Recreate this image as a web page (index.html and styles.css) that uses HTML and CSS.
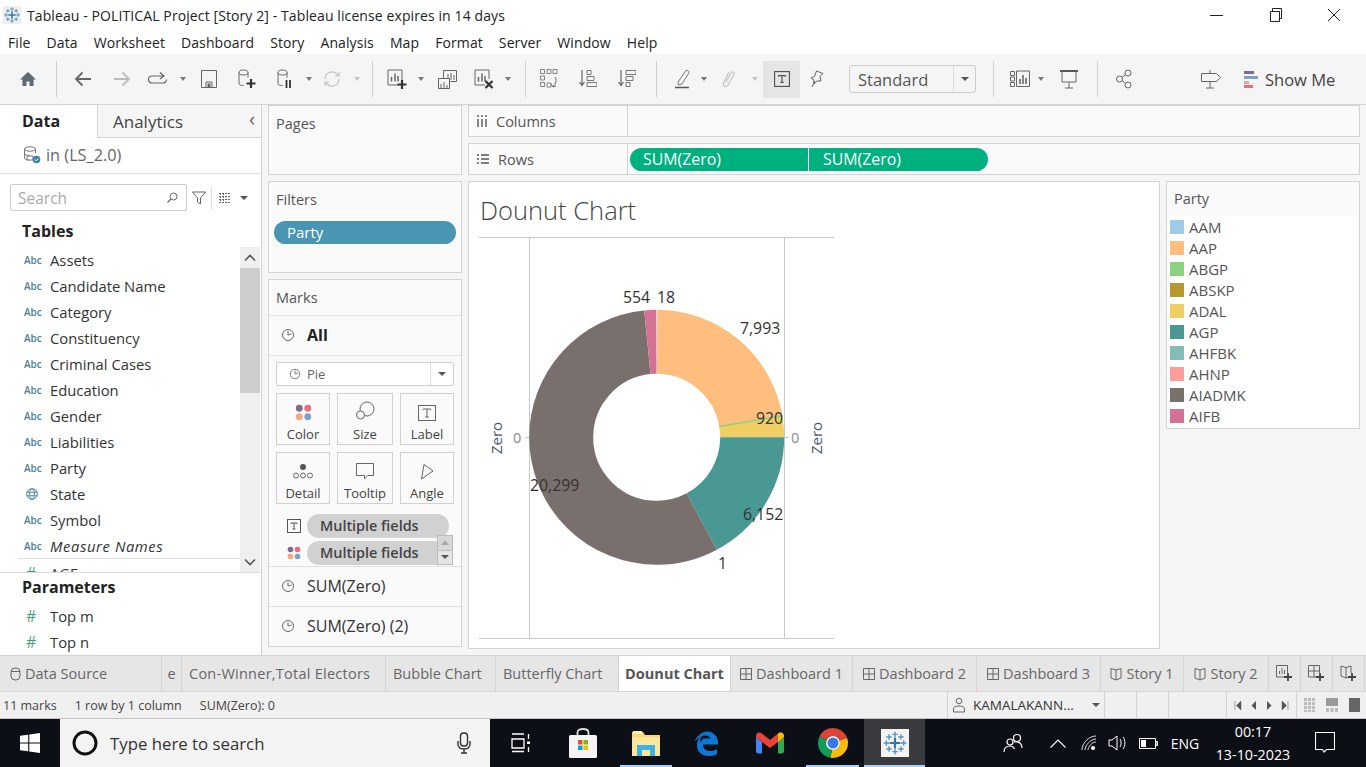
FILE: index.html
```html
<!DOCTYPE html>
<html lang="en">
<head>
  <meta charset="UTF-8" />
  <title>Tableau - POLITICAL Project [Story 2]</title>
  <link rel="stylesheet" href="styles.css">
</head>
<body>
  <svg class="defs" width="0" height="0">
    <symbol id="logo" viewBox="0 0 24 24">
      <g fill="none" stroke="#5b93bd" stroke-width="1.300">
        <path d="M12 1.500v5M9.500 4h5M12 17.500v5M9.500 20h5M1.500 12h5M4 9.500v5M17.500 12h5M20 9.500v5"/>
        <path d="M6.500 4v5M4 6.500h5M17.500 4v5M15 6.500h5M6.500 15v5M4 17.500h5M17.500 15v5M15 17.500h5"/>
        <path d="M12 7v10M7 12h10" stroke-width="2" stroke="#2f76a8"/>
      </g>
    </symbol>
    <symbol id="pie" viewBox="0 0 14 14">
      <circle cx="7" cy="7" r="5.500" fill="none" stroke="#666"/>
      <path d="M7 7V3M7 7l3.500-1" fill="none" stroke="#666"/>
    </symbol>
    <symbol id="dots" viewBox="0 0 16 16">
      <circle cx="4" cy="4" r="3.200" fill="#7b6a94"/>
      <circle cx="12" cy="4" r="3.200" fill="#ee6a7c"/>
      <circle cx="4" cy="12" r="3.200" fill="#f3a97f"/>
      <circle cx="12" cy="12" r="3.200" fill="#7ba1cc"/>
    </symbol>
    <symbol id="tbox" viewBox="0 0 14 14">
      <rect x="0.500" y="0.500" width="13" height="13" fill="none" stroke="#555"/>
      <path d="M4 5V4h6v1M7 4v6M5.500 10h3" fill="none" stroke="#555"/>
    </symbol>
    <symbol id="dash" viewBox="0 0 12 12">
      <path d="M.5.5h11v11H.5zM6 .5v11M.5 6h11" fill="none" stroke="#666"/>
    </symbol>
    <symbol id="story" viewBox="0 0 12 14">
      <path d="M1 1.500l5 1.500 5-1.500v9.500l-5 2-5-2zM6 3v10" fill="none" stroke="#666"/>
    </symbol>
  </svg>

  <div class="app">
    <div class="titlebar">
      <svg class="title-logo" width="18" height="18"><use href="#logo"/></svg>
      <span class="title-text">Tableau - POLITICAL Project [Story 2] - Tableau license expires in 14 days</span>
      <div class="window-btns">
        <svg width="14" height="14" viewBox="0 0 14 14"><path d="M0 7.500h13" stroke="#222" fill="none"/></svg>
        <svg width="14" height="14" viewBox="0 0 14 14"><path d="M1.500 3.500h9v10h-9zM3.500 3.500v-3h9v10h-2" stroke="#222" fill="none"/></svg>
        <svg width="14" height="14" viewBox="0 0 14 14"><path d="M1 1l12 12M13 1L1 13" stroke="#222" fill="none"/></svg>
      </div>
    </div>

    <nav class="menubar">
      <a>File</a><a>Data</a><a>Worksheet</a><a>Dashboard</a><a>Story</a><a>Analysis</a><a>Map</a><a>Format</a><a>Server</a><a>Window</a><a>Help</a>
    </nav>

    <div class="toolbar">
      <div class="tb"><svg width="18" height="18" viewBox="0 0 18 18"><path d="M9 2L1 9.500h2.500V16h4v-4.500h3V16h4V9.500H17z" fill="#5f6a75"/></svg></div>
      <div class="tb"><i class="sep"></i></div>
      <div class="tb"><svg width="18" height="18" viewBox="0 0 18 18"><path d="M17 9H2M8.500 2.500L2 9l6.500 6.500" fill="none" stroke="#666" stroke-width="1.800"/></svg></div>
      <div class="tb"><svg width="18" height="18" viewBox="0 0 18 18"><path d="M1 9h15M9.500 2.500L16 9l-6.500 6.500" fill="none" stroke="#bbb" stroke-width="1.800"/></svg></div>
      <div class="tb"><svg width="20" height="14" viewBox="0 0 20 14"><path d="M15 4H4a3.500 3.500 0 0 0 0 7h11a3.500 3.500 0 0 0 3.500-3.500M12 .5L16 4l-4 3" fill="none" stroke="#666" stroke-width="1.200"/></svg></div>
      <div class="tb"><i class="caret"></i></div>
      <div class="tb"><svg width="16" height="18" viewBox="0 0 16 18"><path d="M.5.5h15v17H.5zM5 17.500V12h6v5.500" fill="none" stroke="#666"/><path d="M6.500 13.500h3v4h-3z" fill="#666"/></svg></div>
      <div class="tb"><svg width="18" height="20" viewBox="0 0 18 20"><path d="M1 3.500v11c0 1.500 2 2 4.500 2M10 3.500v5" fill="none" stroke="#666"/><ellipse cx="5.500" cy="3.500" rx="4.500" ry="2.500" fill="none" stroke="#666"/><path d="M13 10v9M8.500 14.500h9" stroke="#333" stroke-width="2.200"/></svg></div>
      <div class="tb"><svg width="16" height="20" viewBox="0 0 16 20"><path d="M1 3.500v11c0 1.500 2 2 4.500 2M10 3.500v5" fill="none" stroke="#666"/><ellipse cx="5.500" cy="3.500" rx="4.500" ry="2.500" fill="none" stroke="#666"/><path d="M9.500 11v8M13 11v8" stroke="#333" stroke-width="1.800"/></svg></div>
      <div class="tb"><i class="caret"></i></div>
      <div class="tb"><svg width="18" height="18" viewBox="0 0 18 18"><path d="M2 9a7 7 0 0 1 12-5l2 2M16 9a7 7 0 0 1-12 5l-2-2M16 2v4h-4M2 16v-4h4" fill="none" stroke="#c4c4c4" stroke-width="1.200"/></svg></div>
      <div class="tb"><i class="caret off"></i></div>
      <div class="tb"><i class="sep"></i></div>
      <div class="tb"><svg width="20" height="20" viewBox="0 0 20 20"><path d="M12 16H1V1h14v10" fill="none" stroke="#666"/><path d="M4.500 12.500V8M8 12.500V4.500M11 12.500V7" stroke="#666" stroke-width="1.500"/><path d="M15 11v9M10.500 15.500h9" stroke="#333" stroke-width="2.200"/></svg></div>
      <div class="tb"><i class="caret"></i></div>
      <div class="tb"><svg width="19" height="19" viewBox="0 0 19 19"><path d="M5.500 8V.5h13v11h-6" fill="none" stroke="#666"/><path d="M.5 8.500h11v10H.5zM10 8V4M13 10V3M16 10V5" fill="none" stroke="#666"/><path d="M3 18v-4M6 18v-6M9 18v-3" stroke="#666"/></svg></div>
      <div class="tb"><svg width="20" height="20" viewBox="0 0 20 20"><path d="M11 16H1V1h14v9" fill="none" stroke="#666"/><path d="M4.500 12.500V8M8 12.500V4.500M11 12.500V7" stroke="#666" stroke-width="1.500"/><path d="M11.500 12l7 7M18.500 12l-7 7" stroke="#333" stroke-width="2.200"/></svg></div>
      <div class="tb"><i class="caret"></i></div>
      <div class="tb"><i class="sep"></i></div>
      <div class="tb"><svg width="18" height="20" viewBox="0 0 18 20"><path d="M.5.5h4v4h-4zM7 .5h4v4H7zM13 .5h4v4h-4zM.5 7h4v4h-4zM.5 13.500h4v4h-4zM7 14h4v4H7z" fill="none" stroke="#777" stroke-width=".9"/><path d="M15 8c2 3 1 7-2 9M11 15l2 3 3-1" fill="none" stroke="#666"/></svg></div>
      <div class="tb"><svg width="18" height="20" viewBox="0 0 18 20"><path d="M3 1v15M.5 13L3 16.500 5.500 13" fill="none" stroke="#666" stroke-width="1.200"/><path d="M8 1.500h4v4H8zM8 7.500h7v4H8zM8 13.500h10v4H8z" fill="none" stroke="#777"/></svg></div>
      <div class="tb"><svg width="18" height="20" viewBox="0 0 18 20"><path d="M3 1v15M.5 13L3 16.500 5.500 13" fill="none" stroke="#666" stroke-width="1.200"/><path d="M8 1.500h10v4H8zM8 7.500h7v4H8zM8 13.500h4v4H8z" fill="none" stroke="#777"/></svg></div>
      <div class="tb"><i class="sep"></i></div>
      <div class="tb"><svg width="16" height="20" viewBox="0 0 16 20"><path d="M3 13L11 1.500c1-1 3.500.5 3 2L7 15 3.500 16z" fill="none" stroke="#777"/><path d="M0 18.500h14" stroke="#555" stroke-width="1.500"/></svg></div>
      <div class="tb"><i class="caret"></i></div>
      <div class="tb"><svg width="14" height="20" viewBox="0 0 14 20"><path d="M4 13l5-9c1-2 4-.5 3 1.500L6 16c-2 3-6 1-4.500-2L7 3" fill="none" stroke="#c4c4c4" stroke-width="1.200"/></svg></div>
      <div class="tb"><i class="caret off"></i></div>
      <div class="tb tb-on"><svg width="16" height="16"><use href="#tbox"/></svg></div>
      <div class="tb"><svg width="14" height="18" viewBox="0 0 14 18"><path d="M6.500 1l6.500 2.500-3 3 1 4.500H7l-3.500 3 .5-4L1 8l3.500-1.500z" fill="none" stroke="#666"/><path d="M5 11l-3 6" stroke="#666"/></svg></div>
      <div></div>
      <div class="select"><span class="select-val">Standard</span><span class="select-arrow"><i class="caret dark"></i></span></div>
      <div class="tb"><i class="sep"></i></div>
      <div class="tb"><svg width="20" height="18" viewBox="0 0 20 18"><path d="M.5 1.500h4v4h-4zM.5 7h4v4h-4zM.5 12.500h4v4h-4zM6.500 1h13v15.500h-13z" fill="none" stroke="#666"/><path d="M10 14V9M13 14V5M16 14V8" stroke="#666" stroke-width="1.600"/></svg></div>
      <div class="tb"><i class="caret"></i></div>
      <div class="tb"><svg width="18" height="20" viewBox="0 0 18 20"><path d="M0 2h18" stroke="#555" stroke-width="2"/><path d="M2 2v11h14V2M9 13v6M5 19h8" fill="none" stroke="#666"/></svg></div>
      <div class="tb"><i class="sep"></i></div>
      <div class="tb"><svg width="16" height="20" viewBox="0 0 16 20"><circle cx="12" cy="4" r="3" fill="none" stroke="#666"/><circle cx="3.500" cy="10" r="3" fill="none" stroke="#666"/><circle cx="12" cy="16" r="3" fill="none" stroke="#666"/><path d="M6 8.500l3.500-3M6 11.500l3.500 3" stroke="#666"/></svg></div>
      <div></div>
      <div class="tb"><svg width="20" height="20" viewBox="0 0 20 20"><path d="M.5 4.500h15l4 4-4 4H.5zM9 1v3M9 12.500V19M5 19h8" fill="none" stroke="#666"/></svg></div>
      <div class="showme">
        <svg width="14" height="18" viewBox="0 0 14 18"><path d="M0 1h10v3H0z" fill="#7b6a94"/><path d="M0 6h14v3H0z" fill="#7ba1cc"/><path d="M0 11h5v3H0z" fill="#f3a97f"/><path d="M0 15h9v3H0z" fill="#ee6a7c"/></svg>
        <span>Show Me</span>
      </div>
    </div>

    <div class="main">
      <aside class="data-panel">
        <div class="side-tabs">
          <div class="side-tab side-tab-on">Data</div>
          <div class="side-tab side-tab-off">Analytics<span class="collapse">&lsaquo;</span></div>
        </div>
        <div class="ds-row">
          <svg width="18" height="18" viewBox="0 0 18 18"><ellipse cx="7" cy="3" rx="5.500" ry="2.200" fill="none" stroke="#777"/><path d="M1.500 3v9c0 1 1.500 2 4 2M12.500 3v4M1.500 7.500c0 1 2 2 5 2M4 10h6v4H4z" fill="none" stroke="#777"/><circle cx="13.500" cy="13.500" r="3.800" fill="#3f83a8"/><path d="M11.800 13.500l1.300 1.300 2.200-2.400" fill="none" stroke="#fff"/></svg>
          <span>in (LS_2.0)</span>
        </div>
        <div class="search-row">
          <div class="search-box">
            <span>Search</span>
            <svg width="11" height="11" viewBox="0 0 11 11"><circle cx="6.500" cy="4.500" r="3.500" fill="none" stroke="#666"/><path d="M4 7L.5 10.500" stroke="#666" stroke-width="1.300"/></svg>
          </div>
          <svg width="14" height="14" viewBox="0 0 14 14"><path d="M.5 1h13L8.500 7v6l-3-2V7z" fill="none" stroke="#666"/></svg>
          <i class="search-sep"></i>
          <svg width="13" height="10" viewBox="0 0 13 10"><path d="M0 .5h12M0 3.500h12M0 6.500h12M0 9.500h12M1.500 0v10M4.500 0v10" fill="none" stroke="#666" stroke-dasharray="2 1"/></svg>
          <i class="caret dark"></i>
        </div>
        <div class="sec-head">Tables</div>
        <div class="fields">
          <ul class="field-list">
            <li><span class="abc">Abc</span>Assets</li>
            <li><span class="abc">Abc</span>Candidate Name</li>
            <li><span class="abc">Abc</span>Category</li>
            <li><span class="abc">Abc</span>Constituency</li>
            <li><span class="abc">Abc</span>Criminal Cases</li>
            <li><span class="abc">Abc</span>Education</li>
            <li><span class="abc">Abc</span>Gender</li>
            <li><span class="abc">Abc</span>Liabilities</li>
            <li><span class="abc">Abc</span>Party</li>
            <li><span class="abc globe"><svg width="12" height="12" viewBox="0 0 12 12"><circle cx="6" cy="6" r="5.300" fill="none" stroke="#4d86a3"/><ellipse cx="6" cy="6" rx="2.400" ry="5.300" fill="none" stroke="#4d86a3"/><path d="M.7 4.200h10.600M.7 7.800h10.600" stroke="#4d86a3"/></svg></span>State</li>
            <li><span class="abc">Abc</span>Symbol</li>
            <li class="italic"><span class="abc">Abc</span>Measure Names</li>
            <li class="measure"><span class="abc hash">#</span>AGE</li>
          </ul>
          <div class="scrollbar">
            <span class="scroll-btn"><svg width="12" height="8" viewBox="0 0 12 8"><path d="M1 6.500l5-5 5 5" fill="none" stroke="#555" stroke-width="1.600"/></svg></span>
            <span class="scroll-thumb"></span>
            <span class="scroll-btn"><svg width="12" height="8" viewBox="0 0 12 8"><path d="M1 1.500l5 5 5-5" fill="none" stroke="#555" stroke-width="1.600"/></svg></span>
          </div>
        </div>
        <div class="params">
          <div class="sec-head params-head">Parameters</div>
          <div class="param"><span class="abc hash">#</span>Top m</div>
          <div class="param"><span class="abc hash">#</span>Top n</div>
        </div>
      </aside>

      <div class="cards">
        <section class="card card-pages"><h4>Pages</h4></section>
        <section class="card card-filters">
          <h4>Filters</h4>
          <div class="pill-blue">Party</div>
        </section>
        <section class="card card-marks">
          <h4 class="ruled">Marks</h4>
          <div class="marks-row marks-all"><svg width="14" height="14"><use href="#pie"/></svg><b>All</b></div>
          <div class="marks-body">
            <div class="mark-select">
              <svg width="12" height="12"><use href="#pie"/></svg>
              <span>Pie</span>
              <i class="mark-arrow"><i class="caret dark"></i></i>
            </div>
            <div class="mark-btns">
              <div class="mark-btn"><svg width="17" height="17"><use href="#dots"/></svg>Color</div>
              <div class="mark-btn"><svg width="20" height="20" viewBox="0 0 20 20"><circle cx="12" cy="8" r="7" fill="none" stroke="#666"/><circle cx="5.500" cy="14" r="4" fill="#fafafa" stroke="#666"/></svg>Size</div>
              <div class="mark-btn"><svg width="18" height="16" viewBox="0 0 18 16"><rect x=".5" y=".5" width="17" height="15" fill="none" stroke="#666"/><path d="M5.500 5V4h7v1M9 4v8M7 12h4" fill="none" stroke="#666"/></svg>Label</div>
              <div class="mark-btn"><svg width="20" height="17" viewBox="0 0 20 17"><circle cx="10" cy="4" r="3" fill="#555"/><circle cx="3" cy="12.500" r="2.500" fill="none" stroke="#666"/><circle cx="10" cy="12.500" r="2.500" fill="none" stroke="#666"/><circle cx="17" cy="12.500" r="2.500" fill="none" stroke="#666"/></svg>Detail</div>
              <div class="mark-btn"><svg width="19" height="17" viewBox="0 0 19 17"><path d="M.5.500h17v12h-6l-3 3.500v-3.500h-8z" fill="none" stroke="#666"/></svg>Tooltip</div>
              <div class="mark-btn"><svg width="14" height="16" viewBox="0 0 14 16"><path d="M4 .5l9 6.500L1.500 15z" fill="none" stroke="#666" stroke-linejoin="round"/></svg>Angle</div>
            </div>
            <div class="encodings">
              <div class="enc"><svg width="14" height="14"><use href="#tbox"/></svg><span class="enc-pill">Multiple fields</span></div>
              <div class="enc"><svg width="14" height="14"><use href="#dots"/></svg><span class="enc-pill">Multiple fields</span></div>
              <div class="enc-scroll"><span><i class="caret off up"></i></span><span><i class="caret dark"></i></span></div>
            </div>
          </div>
          <div class="marks-row marks-sum"><svg width="14" height="14"><use href="#pie"/></svg>SUM(Zero)</div>
          <div class="marks-row marks-sum"><svg width="14" height="14"><use href="#pie"/></svg>SUM(Zero) (2)</div>
        </section>
      </div>

      <div class="work">
        <div class="shelf">
          <div class="shelf-label"><svg width="10" height="12" viewBox="0 0 10 12"><path d="M1 4v8M5 4v8M9 4v8M1 0v2M5 0v2M9 0v2" stroke="#555" stroke-width="1.400"/></svg>Columns</div>
        </div>
        <div class="shelf">
          <div class="shelf-label"><svg width="12" height="10" viewBox="0 0 12 10"><path d="M0 1h2M0 5h2M0 9h2M4 1h8M4 5h8M4 9h8" stroke="#555" stroke-width="1.400"/></svg>Rows</div>
          <div class="shelf-pills">
            <span class="pill-green pill-first">SUM(Zero)</span>
            <span class="pill-green pill-last">SUM(Zero)</span>
          </div>
        </div>
        <div class="view-row">
          <div class="viz">
            <h2 class="viz-title">Dounut Chart</h2>
            <svg class="donut" width="355" height="402" viewBox="0 0 355 402">
              <path d="M0 .5h355M0 401.500h355M50.500 0v402M305.500 0v402M46 200.500h4M306 200.500h4" fill="none" stroke="#c8c8c8"/>
              <g fill="none" stroke-width="64" transform="rotate(-90 177.700 200.300)">
                <circle cx="177.700" cy="200.300" r="95.500" pathLength="360" stroke="#a0cbe8" stroke-dasharray="0.400 359.600"/>
                <circle cx="177.700" cy="200.300" r="95.500" pathLength="360" stroke="#ffbe7d" stroke-dasharray="80 280" stroke-dashoffset="-0.300"/>
                <circle cx="177.700" cy="200.300" r="95.500" pathLength="360" stroke="#f1ce63" stroke-dasharray="9.700 350.300" stroke-dashoffset="-80.300"/>
                <circle cx="177.700" cy="200.300" r="95.500" pathLength="360" stroke="#499894" stroke-dasharray="61.800 298.200" stroke-dashoffset="-90"/>
                <circle cx="177.700" cy="200.300" r="95.500" pathLength="360" stroke="#79706e" stroke-dasharray="202.500 157.500" stroke-dashoffset="-151.800"/>
                <circle cx="177.700" cy="200.300" r="95.500" pathLength="360" stroke="#d37295" stroke-dasharray="5.500 354.500" stroke-dashoffset="-354.300"/>
              </g>
              <path d="M240.300 189.600L303.400 178.800" stroke="#8cd17d" stroke-width="1.500"/>
              <g class="mark-labels">
                <text x="144" y="66">554</text>
                <text x="178" y="66">18</text>
                <text x="261" y="97">7,993</text>
                <text x="277" y="187">920</text>
                <text x="51" y="254">20,299</text>
                <text x="264" y="283">6,152</text>
                <text x="239" y="332">1</text>
              </g>
              <g class="axis-labels">
                <text x="34" y="206">0</text>
                <text x="312" y="206">0</text>
              </g>
              <g class="axis-titles">
                <text transform="translate(23 201) rotate(-90)">Zero</text>
                <text transform="translate(343 201) rotate(-90)">Zero</text>
              </g>
            </svg>
          </div>
          <div class="legend">
            <h4>Party</h4>
            <ul class="legend-list">
              <li><i class="sw sw-aam"></i>AAM</li>
              <li><i class="sw sw-aap"></i>AAP</li>
              <li><i class="sw sw-abgp"></i>ABGP</li>
              <li><i class="sw sw-abskp"></i>ABSKP</li>
              <li><i class="sw sw-adal"></i>ADAL</li>
              <li><i class="sw sw-agp"></i>AGP</li>
              <li><i class="sw sw-ahfbk"></i>AHFBK</li>
              <li><i class="sw sw-ahnp"></i>AHNP</li>
              <li><i class="sw sw-aiadmk"></i>AIADMK</li>
              <li><i class="sw sw-aifb"></i>AIFB</li>
            </ul>
          </div>
        </div>
      </div>
    </div>

    <div class="tabs">
      <div class="tab tab-ds"><svg width="11" height="14" viewBox="0 0 11 14"><rect x="1" y="1" width="9" height="12" rx="4" fill="none" stroke="#666"/><path d="M1 4.500h9" stroke="#666"/></svg>Data Source</div>
      <div class="tab tab-e"><span>e</span></div>
      <div class="tab tab-con">Con-Winner,Total Electors</div>
      <div class="tab tab-bub">Bubble Chart</div>
      <div class="tab tab-but">Butterfly Chart</div>
      <div class="tab tab-on">Dounut Chart</div>
      <div class="tab tab-d1"><svg width="12" height="12"><use href="#dash"/></svg>Dashboard 1</div>
      <div class="tab tab-d2"><svg width="12" height="12"><use href="#dash"/></svg>Dashboard 2</div>
      <div class="tab tab-d3"><svg width="12" height="12"><use href="#dash"/></svg>Dashboard 3</div>
      <div class="tab tab-s1"><svg width="12" height="14"><use href="#story"/></svg>Story 1</div>
      <div class="tab tab-s2"><svg width="12" height="14"><use href="#story"/></svg>Story 2</div>
      <div class="tab tab-add"><svg width="17" height="17" viewBox="0 0 17 17"><path d="M9 12H.5V.5h11V8" fill="none" stroke="#666"/><path d="M3.500 9V6M6 9V3M8.500 9V5" stroke="#666"/><path d="M12 8v8M8 12h8" stroke="#444" stroke-width="1.800"/></svg></div>
      <div class="tab tab-add"><svg width="17" height="17" viewBox="0 0 17 17"><path d="M9 12H.5V.5h11V8M6 .5V12M.5 6h11" fill="none" stroke="#666"/><path d="M12 8v8M8 12h8" stroke="#444" stroke-width="1.800"/></svg></div>
      <div class="tab tab-add"><svg width="17" height="17" viewBox="0 0 17 17"><path d="M8 12.500l-2 .5-5-2V1l5 1.500L11 1v7M6 2.500V13" fill="none" stroke="#666"/><path d="M12 8v8M8 12h8" stroke="#444" stroke-width="1.800"/></svg></div>
    </div>

    <div class="status">
      <div class="status-info"><span>11 marks</span><span>1 row by 1 column</span><span>SUM(Zero): 0</span></div>
      <div class="st-cell st-user">
        <svg width="12" height="16" viewBox="0 0 12 16"><circle cx="6" cy="4" r="2.800" fill="none" stroke="#666"/><path d="M.5 15v-3c0-2 2-3 5.500-3s5.500 1 5.500 3v3z" fill="none" stroke="#666"/></svg>
        <span>KAMALAKANN...</span><i class="caret dark"></i>
      </div>
      <div class="st-cell st-a"></div>
      <div class="st-cell st-a"></div>
      <div class="st-cell st-b"></div>
      <div class="st-cell st-nav">
        <svg width="8" height="9" viewBox="0 0 8 9"><path d="M1 0v9M7 0v9L2.500 4.500z" fill="#555" stroke="#555" stroke-width=".5"/></svg>
        <svg width="6" height="9" viewBox="0 0 6 9"><path d="M5 0v9L.5 4.500z" fill="#555"/></svg>
        <svg width="6" height="9" viewBox="0 0 6 9"><path d="M1 0v9l4.500-4.500z" fill="#555"/></svg>
        <svg width="8" height="9" viewBox="0 0 8 9"><path d="M7 0v9M1 0v9l4.500-4.500z" fill="#555" stroke="#555" stroke-width=".5"/></svg>
      </div>
      <div class="st-cell st-views">
        <svg width="11" height="14" viewBox="0 0 11 14"><path d="M0 0h3v3H0zM4 0h3v3H4zM8 0h3v3H8zM0 4h3v3H0zM4 4h3v3H4zM8 4h3v3H8zM0 8h3v3H0zM4 8h3v3H4zM8 8h3v3H8zM0 12h3v2H0zM4 12h3v2H4zM8 12h3v2H8z" fill="#bbb"/></svg>
        <svg width="12" height="14" viewBox="0 0 12 14"><path d="M0 0h12v8H0z" fill="#999"/><path d="M0 10h3v4H0zM4.500 10h3v4h-3zM9 10h3v4H9z" fill="#bbb"/></svg>
        <svg width="11" height="14" viewBox="0 0 11 14"><path d="M0 0h11v14H0z" fill="#666"/></svg>
      </div>
    </div>

    <div class="taskbar">
      <div class="start"><svg width="20" height="20" viewBox="0 0 20 20"><path d="M0 2.800L8.200 1.700v7.800H0zM9.300 1.500L20 0v9.500H9.300zM0 10.500h8.200v7.800L0 17.200zM9.300 10.500H20V20L9.300 18.500z" fill="#fff"/></svg></div>
      <div class="task-search">
        <svg class="cortana" width="26" height="26" viewBox="0 0 26 26"><circle cx="13" cy="13" r="11" fill="none" stroke="#111" stroke-width="3"/></svg>
        <span>Type here to search</span>
        <svg class="mic" width="14" height="22" viewBox="0 0 14 22"><rect x="3.500" y="1" width="7" height="13" rx="3" fill="none" stroke="#333" stroke-width="1.400"/><path d="M1 9v3c0 3.500 2.500 5 6 5s6-1.500 6-5V9M7 17v4M4 21h6" fill="none" stroke="#333" stroke-width="1.400"/></svg>
      </div>
      <div class="task-app"><svg width="20" height="20" viewBox="0 0 20 20"><path d="M1 1h12M1 18.500h12M1 6h12v9H1zM17.500 1v5M17.500 14v5" fill="none" stroke="#fff" stroke-width="1.300"/><path d="M16 8.500h3v2.500h-3z" fill="#fff"/></svg></div>
      <div class="task-app"><svg width="28" height="30" viewBox="0 0 28 30"><path d="M8.500 7V4.500C8.500 2 11 1 14 1s5.500 1 5.500 3.500V7" fill="none" stroke="#ddd" stroke-width="1.800"/><rect y="7" width="28" height="23" rx="1.500" fill="#f4f4f4"/><path d="M9 12h4.500v4.500H9z" fill="#f25022"/><path d="M14.500 12H19v4.500h-4.500z" fill="#7fba00"/><path d="M9 17.500h4.500V22H9z" fill="#00a4ef"/><path d="M14.500 17.500H19V22h-4.500z" fill="#ffb900"/></svg></div>
      <div class="task-app task-open"><svg width="28" height="26" viewBox="0 0 28 26"><path d="M0 2h11l2 3h15v21H0z" fill="#f6d978"/><path d="M1 1h9v3H1z" fill="#fff2b5"/><path d="M0 7h28v19H0z" fill="#fce69a"/><path d="M5 26V15h18v11h-5v-6h-8v6z" fill="#39b4e8"/></svg></div>
      <div class="task-app"><svg width="28" height="28" viewBox="0 0 28 28"><path d="M4.500 15h19c.5-7-4-12-10-12-5 0-9 3-12 8 3-3 6-5 10-5 3 0 5 2 5 4H9" fill="#0a78d7" stroke="#0a78d7" stroke-width="1"/><path d="M9 15c0 5 3 7 7 7 3 0 5-.5 7-2v5c-2 1.500-5 2-8 2-7 0-12-4-12-11 0-4 2-8 6-10-2 2-3 4.500-3 6" fill="#0a78d7"/></svg></div>
      <div class="task-app"><svg width="28" height="22" viewBox="0 0 28 22"><path d="M0 5v14c0 1.500 1 2.500 2.500 2.500H6V10z" fill="#4285f4"/><path d="M22 10v11.500h3.500c1.500 0 2.500-1 2.500-2.500V5z" fill="#34a853"/><path d="M0 4c0-3 3.500-4.500 6-2.500L14 8l8-6.500C24.500-.5 28 1 28 4v1l-6 5-8 6-8-6-6-5z" fill="#ea4335"/><path d="M22 1.500C24.500-.5 28 1 28 4v1l-6 5z" fill="#fbbc04"/></svg></div>
      <div class="task-app task-open">
        <svg width="30" height="30" viewBox="0 0 30 30">
          <g fill="none" stroke-width="8" transform="rotate(-90 15 15)">
            <circle cx="15" cy="15" r="11" pathLength="360" stroke="#db4437" stroke-dasharray="135 225" stroke-dashoffset="65"/>
            <circle cx="15" cy="15" r="11" pathLength="360" stroke="#fbbc04" stroke-dasharray="120 240" stroke-dashoffset="-70"/>
            <circle cx="15" cy="15" r="11" pathLength="360" stroke="#0f9d58" stroke-dasharray="105 255" stroke-dashoffset="-190"/>
          </g>
          <circle cx="15" cy="15" r="7" fill="#fff"/><circle cx="15" cy="15" r="5.500" fill="#3b78e7"/>
        </svg>
      </div>
      <div class="task-app task-tableau task-open"><div class="tableau-tile"><svg width="26" height="26"><use href="#logo"/></svg></div></div>
      <div class="tray">
        <svg width="20" height="20" viewBox="0 0 20 20"><circle cx="7" cy="9" r="3" fill="none" stroke="#fff" stroke-width="1.200"/><circle cx="14" cy="5" r="3.500" fill="none" stroke="#fff" stroke-width="1.200"/><path d="M1 19c0-4 2.500-6 6-6s4 2 4.500 3M11 9c2-1 8 0 8 6" fill="none" stroke="#fff" stroke-width="1.200"/></svg>
        <svg width="16" height="9" viewBox="0 0 16 9"><path d="M.5 8.500L8 1l7.500 7.500" fill="none" stroke="#fff" stroke-width="1.100"/></svg>
        <svg width="16" height="16" viewBox="0 0 16 16"><path d="M1 15C1 8 8 1 15 1M4 15c0-5 6-11 11-11M7 15c0-3 4-8 8-8" fill="none" stroke="#ddd"/><circle cx="12" cy="13" r="2" fill="#fff"/></svg>
        <svg width="20" height="18" viewBox="0 0 20 18"><path d="M1 6h3l5-4v14l-5-4H1zM12 5c1.500 2 1.500 6 0 8M15 3c2.500 3 2.500 9 0 12" fill="none" stroke="#fff"/></svg>
        <svg width="19" height="11" viewBox="0 0 19 11"><path d="M.5.5h16v10H.5zM17 3.500h1.500v4H17z" fill="none" stroke="#fff"/><path d="M2 2h5v7H2z" fill="#fff"/></svg>
        <span class="tray-lang">ENG</span>
        <div class="clock"><span>00:17</span><span>13-10-2023</span></div>
        <svg width="20" height="22" viewBox="0 0 20 22"><path d="M.5.5h19v17h-8L9 20l-1.500-2.500h-7z" fill="none" stroke="#fff" stroke-width="1.100"/></svg>
      </div>
    </div>
  </div>
</body>
</html>
```

FILE: styles.css
```css
* {
  box-sizing: border-box;
}

html, body {
  margin: 0;
  width: 1366px;
  height: 767px;
  overflow: hidden;
}

body {
  font-family: "Open Sans", "Liberation Sans", sans-serif;
  font-size: 14px;
  color: #333;
  background: #f5f5f5;
}

h2, h4, ul {
  margin: 0;
  padding: 0;
  list-style: none;
  font-weight: normal;
}

i {
  font-style: normal;
}

.defs {
  position: absolute;
}

.app {
  display: flex;
  flex-direction: column;
  height: 767px;
}

/* title + menu */
.titlebar {
  height: 30px;
  background: #fff;
  display: flex;
  align-items: center;
  padding-left: 3px;
  color: #222;
  letter-spacing: .1px;
}

.title-logo {
  background: #eee;
}

.title-text {
  margin-left: 6px;
}

.window-btns {
  margin-left: auto;
  display: flex;
  gap: 44.5px;
  padding-right: 25px;
}

.menubar {
  height: 24px;
  background: #fff;
  display: flex;
  align-items: center;
  gap: 16px;
  padding-left: 8px;
  color: #222;
  letter-spacing: .1px;
}

/* toolbar */
.toolbar {
  height: 51px;
  background: #f5f5f5;
  border-bottom: 1px solid #d4d4d4;
  padding-left: 8px;
  display: grid;
  grid-template-columns: 40px 16px 38px 40px 32px 18px 34px 42px 34px 14px 32px 18px 12px 38px 10px 42px 32px 16px 18px 30px 48px 30px 28px 26px 16px 34px 17px 37px 34px 15px 127px 34px 20px 22px 34px 22px 32px 52px 38px 1fr;
  align-items: center;
}

.tb {
  height: 37px;
  display: flex;
  align-items: center;
  justify-content: center;
}

.tb-on {
  background: #e5e5e5;
}

.sep {
  display: block;
  width: 1px;
  height: 36px;
  background: #d0d0d0;
}

.caret {
  display: inline-block;
  width: 0;
  height: 0;
  border-left: 3px solid transparent;
  border-right: 3px solid transparent;
  border-top: 4px solid #777;
}

.caret.dark {
  border-left-width: 4px;
  border-right-width: 4px;
  border-top: 4px solid #555;
}

.caret.off {
  border-top-color: #c4c4c4;
}

.caret.up {
  border-top: 0;
  border-bottom: 5px solid #aaa;
  border-left-width: 4px;
  border-right-width: 4px;
}

.select {
  height: 28px;
  border: 1px solid #ccc;
  border-radius: 3px;
  display: flex;
  align-items: center;
}

.select-val {
  flex: 1;
  padding-left: 8px;
  font-size: 16.5px;
  color: #555;
}

.select-arrow {
  width: 22px;
  height: 26px;
  border-left: 1px solid #ddd;
  display: flex;
  align-items: center;
  justify-content: center;
}

.showme {
  display: flex;
  align-items: center;
  gap: 7px;
  padding-left: 14px;
  font-size: 16.5px;
  color: #444;
}

/* main area */
.main {
  height: 550px;
  display: flex;
}

.data-panel {
  width: 262px;
  background: #fff;
  border-right: 1px solid #d4d4d4;
  display: flex;
  flex-direction: column;
}

.side-tabs {
  height: 33px;
  display: flex;
}

.side-tab {
  flex: 1;
  display: flex;
  align-items: center;
  padding-left: 15px;
  font-size: 16px;
  color: #444;
  background: #f5f5f5;
  border-left: 1px solid #d4d4d4;
  border-bottom: 1px solid #d4d4d4;
  position: relative;
}

.side-tab-off {
  font-size: 17px;
  padding-top: 2px;
}

.side-tab-on {
  flex: 0 0 97px;
  padding-left: 22px;
  font-weight: 700;
  color: #222;
  background: #fff;
  border: 0;
}

.collapse {
  position: absolute;
  right: 6px;
  top: 0;
  font-size: 20px;
  color: #666;
  line-height: 28px;
}

.ds-row {
  height: 37px;
  border-bottom: 1px solid #e0e0e0;
  display: flex;
  align-items: center;
  gap: 5px;
  padding-left: 23px;
  color: #666;
  font-size: 16.3px;
}

.search-row {
  height: 43px;
  padding: 9px 0 7px 10px;
  display: flex;
  align-items: center;
  gap: 5px;
  margin-top: 1px;
}

.search-box {
  width: 177px;
  height: 27px;
  border: 1px solid #ccc;
  border-radius: 2px;
  display: flex;
  align-items: center;
  justify-content: space-between;
  padding: 0 5px 0 7px;
  color: #aaa;
  font-size: 15.5px;
}

.search-sep {
  width: 1px;
  height: 22px;
  background: #ddd;
  margin: 0 1px 0 0;
}

.search-row svg:last-of-type {
  margin: 0 3px 0 1px;
}

.sec-head {
  height: 26px;
  padding-left: 22px;
  font-size: 16px;
  font-weight: 700;
  color: #222;
  display: flex;
  align-items: center;
}

.fields {
  margin-top: 3px;
  height: 325px;
  display: flex;
}

.field-list {
  flex: 1;
  overflow: hidden;
}

.field-list li, .param {
  height: 26px;
  display: flex;
  align-items: center;
  font-size: 14.8px;
  color: #333;
}

.field-list li.italic {
  font-style: italic;
  letter-spacing: .6px;
}

.field-list li.measure {
  margin: -1px 0 0 18px;
  border-top: 1px solid #ddd;
  padding-top: 2px;
}

.measure .abc {
  width: 32px;
}

.abc {
  width: 50px;
  flex: none;
  padding-left: 24px;
  font-size: 10px;
  font-weight: 600;
  color: #4d7f9a;
  font-style: normal;
  letter-spacing: 0;
}

.abc.globe {
  padding-left: 26px;
  display: flex;
  align-items: center;
}

.abc.hash {
  font-size: 16px;
  font-weight: 400;
  color: #4a9e7f;
  padding-left: 26px;
}

.measure .abc.hash {
  padding-left: 8px;
}

.scrollbar {
  width: 20px;
  margin-right: 1px;
  background: #efefef;
  display: flex;
  flex-direction: column;
}

.scroll-btn {
  height: 21px;
  display: flex;
  align-items: center;
  justify-content: center;
}

.scroll-thumb {
  height: 125px;
  background: #cdcdcd;
  margin-bottom: auto;
}

.params {
  flex: 1;
  border-top: 1px solid #ddd;
}

.params-head {
  height: 28px;
  margin-bottom: 2px;
}

/* pages, filters, marks */
.cards {
  width: 194px;
  margin-left: 6px;
  display: flex;
  flex-direction: column;
  gap: 6px;
}

.card {
  background: #fafafa;
  border: 1px solid #d4d4d4;
}

.card h4, .legend h4 {
  height: 36px;
  padding: 0 0 2px 7px;
  font-size: 14.5px;
  color: #555;
  display: flex;
  align-items: center;
}

.card-pages {
  height: 70px;
}

.card-filters {
  height: 92px;
}

.pill-blue {
  margin: 3px 5px 0;
  height: 23px;
  border-radius: 12px;
  background: #4996b2;
  color: #fff;
  padding-left: 13px;
  font-size: 15px;
  line-height: 23px;
}

.card-marks {
  height: 368px;
}

.card h4.ruled {
  padding-bottom: 0;
  border-bottom: 1px solid #e0e0e0;
}

.marks-row {
  height: 40px;
  display: flex;
  align-items: center;
  gap: 12px;
  padding: 0 0 2px 12px;
  color: #333;
}

.marks-all {
  border-bottom: 1px solid #e0e0e0;
  font-size: 16px;
}

.marks-all b {
  color: #222;
}

.marks-sum {
  border-top: 1px solid #e0e0e0;
  font-size: 16px;
}

.marks-body {
  height: 210px;
  padding: 6px 7px 0;
}

.mark-select {
  height: 24px;
  width: 178px;
  background: #fff;
  border: 1px solid #d0d0d0;
  border-radius: 2px;
  display: flex;
  align-items: center;
  padding-left: 12px;
  gap: 6px;
  font-size: 13px;
  color: #666;
}

.mark-arrow {
  margin-left: auto;
  width: 23px;
  height: 22px;
  border-left: 1px solid #ddd;
  display: flex;
  align-items: center;
  justify-content: center;
}

.mark-btns {
  margin-top: 7px;
  width: 178px;
  display: grid;
  grid-template-columns: 54px 56px 54px;
  grid-auto-rows: 52px;
  gap: 7px;
}

.mark-btn {
  border: 1px solid #d0d0d0;
  background: #fafafa;
  display: flex;
  flex-direction: column;
  align-items: center;
  justify-content: flex-end;
  padding-bottom: 1px;
  gap: 4px;
  font-size: 13px;
  color: #444;
}

.encodings {
  margin: 10px 0 0 -7px;
  height: 52px;
  overflow: hidden;
  position: relative;
}

.enc {
  height: 24px;
  margin-bottom: 3px;
  padding-left: 18px;
  display: flex;
  align-items: center;
  gap: 6px;
}

.enc-pill {
  width: 142px;
  height: 24px;
  border-radius: 12px;
  background: #d1d1d1;
  padding-left: 13px;
  font-size: 14.4px;
  font-weight: 600;
  line-height: 24px;
  color: #444;
}

.enc-scroll {
  position: absolute;
  left: 168px;
  top: 21px;
  width: 16px;
  height: 30px;
  display: flex;
  flex-direction: column;
  border: 1px solid #bbb;
  background: #d8d8d8;
}

.enc-scroll span {
  flex: 1;
  display: flex;
  align-items: center;
  justify-content: center;
}

.enc-scroll span + span {
  background: #e4e4e4;
  border-top: 1px solid #bbb;
}

/* shelves and view */
.work {
  width: 892px;
  margin-left: 6px;
  display: flex;
  flex-direction: column;
  gap: 6px;
}

.shelf {
  height: 32px;
  background: #fafafa;
  border: 1px solid #d4d4d4;
  display: flex;
  align-items: center;
}

.shelf-label {
  width: 159px;
  height: 100%;
  border-right: 1px solid #d4d4d4;
  display: flex;
  align-items: center;
  gap: 9px;
  padding-left: 8px;
  font-size: 14.5px;
  color: #555;
}

.shelf-pills {
  display: flex;
  gap: 1px;
  padding-left: 2px;
}

.pill-green {
  width: 178px;
  height: 23px;
  background: #00b180;
  color: #fff;
  font-size: 15.9px;
  line-height: 23px;
  padding-left: 13px;
}

.pill-first {
  border-radius: 12px 0 0 12px;
}

.pill-last {
  width: 179px;
  padding-left: 14px;
  border-radius: 0 12px 12px 0;
}

.view-row {
  height: 468px;
  display: flex;
  gap: 6px;
  align-items: flex-start;
}

.viz {
  width: 692px;
  height: 468px;
  background: #fff;
  border: 1px solid #d4d4d4;
}

.viz-title {
  height: 55px;
  padding: 10px 0 0 11px;
  font-size: 25.5px;
  font-weight: 300;
  color: #444;
  line-height: 36px;
}

.donut {
  display: block;
  margin-left: 10px;
}

.mark-labels text {
  font-size: 15.8px;
  fill: #333;
}

.axis-labels text {
  font-size: 14.5px;
  fill: #888;
}

.axis-titles text {
  font-size: 15px;
  fill: #3f5870;
  text-anchor: middle;
}

.legend {
  width: 194px;
  height: 248px;
  background: #fff;
  border: 1px solid #d4d4d4;
}

.legend h4 {
  height: 34px;
  background: #fafafa;
}

.legend-list {
  padding-left: 3px;
}

.legend-list li {
  height: 21px;
  display: flex;
  align-items: center;
  gap: 5px;
  font-size: 15px;
  color: #555;
}

.sw {
  width: 14px;
  height: 14px;
}

.sw-aam { background: #a0cbe8; }
.sw-aap { background: #ffbe7d; }
.sw-abgp { background: #8cd17d; }
.sw-abskp { background: #b6992d; }
.sw-adal { background: #f1ce63; }
.sw-agp { background: #499894; }
.sw-ahfbk { background: #86bcb6; }
.sw-ahnp { background: #ff9d9a; }
.sw-aiadmk { background: #79706e; }
.sw-aifb { background: #d37295; }

/* sheet tabs */
.tabs {
  height: 37px;
  display: flex;
  background: #e6e6e6;
  border-top: 1px solid #d4d4d4;
  border-bottom: 1px solid #d4d4d4;
}

.tab {
  display: flex;
  align-items: center;
  justify-content: center;
  gap: 4px;
  border-right: 1px solid #d4d4d4;
  font-size: 14.5px;
  color: #666;
}

.tab-ds { width: 162px; justify-content: flex-start; padding-left: 10px; }
.tab-e { width: 20px; }
.tab-con { width: 204px; justify-content: flex-start; padding-left: 7px; letter-spacing: .25px; }
.tab-bub { width: 110px; justify-content: flex-start; padding-left: 7px; }
.tab-but { width: 123px; justify-content: flex-start; padding-left: 7px; }
.tab-on { width: 112px; background: #fff; color: #555; font-weight: 700; }
.tab-d1 { width: 122px; }
.tab-d2 { width: 124px; }
.tab-d3 { width: 124px; }
.tab-s1 { width: 83px; }
.tab-s2 { width: 85px; }
.tab-add { width: 32px; }

/* status bar */
.status {
  height: 26px;
  background: #f0f0f0;
  display: flex;
  font-size: 12.5px;
  color: #444;
}

.status-info {
  flex: 1;
  display: flex;
  align-items: center;
  gap: 18px;
  padding-left: 3px;
}

.st-cell {
  height: 100%;
  border-left: 1px solid #d4d4d4;
  display: flex;
  align-items: center;
}

.st-user {
  width: 157px;
  gap: 8px;
  padding-left: 5px;
  font-size: 13.5px;
  color: #333;
}

.st-user .caret {
  margin-left: 10px;
}

.st-a {
  width: 32px;
}

.st-b {
  width: 58px;
}

.st-nav {
  width: 70px;
  justify-content: center;
  gap: 9px;
}

.st-views {
  width: 70px;
  justify-content: center;
  gap: 11px;
}

/* windows taskbar */
.taskbar {
  height: 49px;
  background: #0d0f16;
  border-top: 1px solid #c4c4c4;
  display: flex;
}

.start {
  width: 60px;
  display: flex;
  align-items: center;
  justify-content: center;
}

.task-search {
  width: 430px;
  background: #f3f3f3;
  display: flex;
  align-items: center;
  padding-left: 12px;
  font-size: 16.8px;
  color: #333;
  gap: 12px;
}

.mic {
  margin-left: auto;
  margin-right: 19px;
}

.task-app {
  width: 62.3px;
  display: flex;
  align-items: center;
  justify-content: center;
  position: relative;
}

.task-open::after {
  content: '';
  position: absolute;
  left: 5px;
  right: 5px;
  bottom: 0;
  height: 2px;
  background: #a9d0f5;
}

.task-tableau {
  width: 61.5px;
  background: #3b3b3f;
}

.task-tableau::after {
  left: 0;
  right: 0;
}

.tableau-tile {
  width: 28px;
  height: 28px;
  background: #f3f3f3;
  display: flex;
  align-items: center;
  justify-content: center;
}

.tray {
  margin-left: auto;
  width: 376px;
  padding-right: 10px;
  display: grid;
  grid-template-columns: 46px 44px 18px 40px 20px 54px 82px 1fr;
  align-items: center;
  justify-items: center;
  color: #fff;
}

.tray-lang {
  font-size: 14px;
}

.clock {
  display: flex;
  flex-direction: column;
  align-items: center;
  gap: 4px;
  font-size: 14.3px;
  line-height: 19px;
}
```
